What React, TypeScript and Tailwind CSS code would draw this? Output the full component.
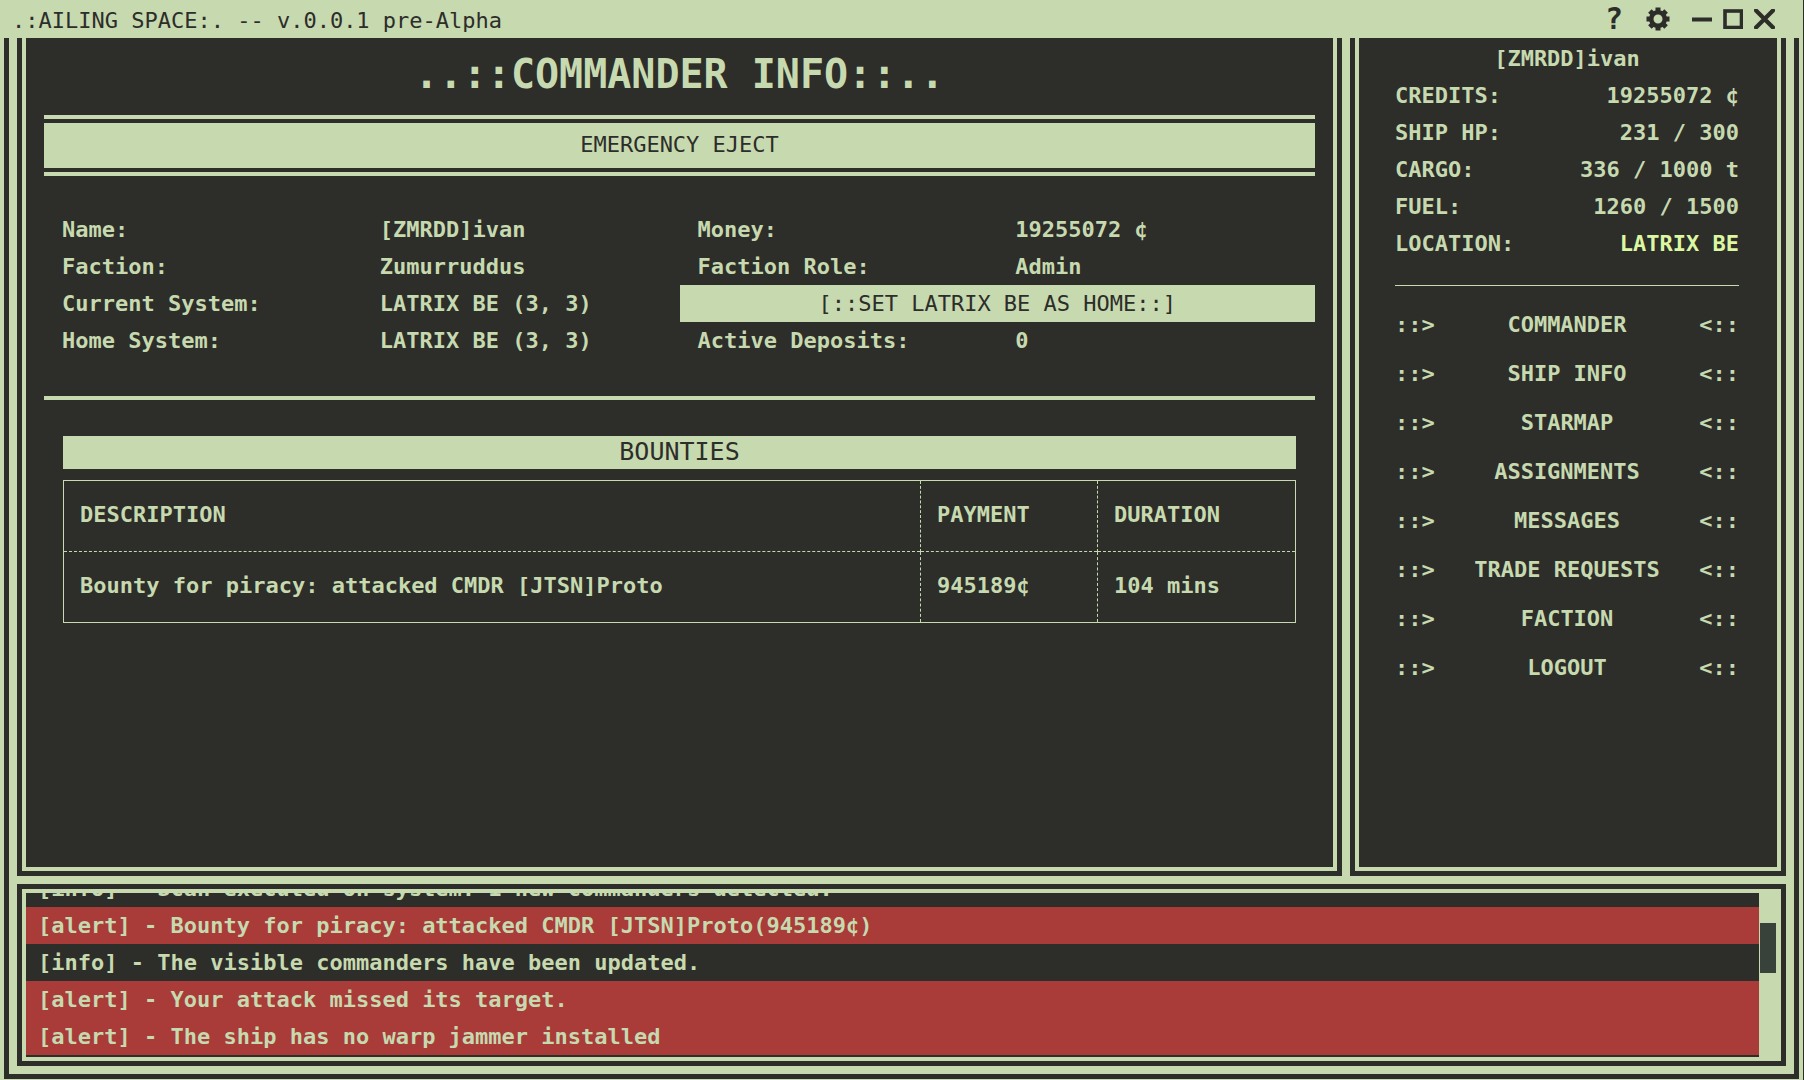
import React from 'react'

const info = [
  ['Name:', '[ZMRDD]ivan', 'Money:', '19255072 ¢'],
  ['Faction:', 'Zumurruddus', 'Faction Role:', 'Admin'],
  ['Current System:', 'LATRIX BE (3, 3)'],
  ['Home System:', 'LATRIX BE (3, 3)', 'Active Deposits:', '0'],
]

const stats = [
  ['CREDITS:', '19255072 ¢'],
  ['SHIP HP:', '231 / 300'],
  ['CARGO:', '336 / 1000 t'],
  ['FUEL:', '1260 / 1500'],
]

const menu = ['COMMANDER', 'SHIP INFO', 'STARMAP', 'ASSIGNMENTS', 'MESSAGES', 'TRADE REQUESTS', 'FACTION', 'LOGOUT']

const bounties = [{ description: 'Bounty for piracy: attacked CMDR [JTSN]Proto', payment: '945189¢', duration: '104 mins' }]

const logs = [
  { level: 'info', text: 'Scan executed on system: 1 new commanders detected.' },
  { level: 'alert', text: 'Bounty for piracy: attacked CMDR [JTSN]Proto(945189¢)' },
  { level: 'info', text: 'The visible commanders have been updated.' },
  { level: 'alert', text: 'Your attack missed its target.' },
  { level: 'alert', text: 'The ship has no warp jammer installed' },
]

const TitleBar = () => (
  <header className="flex h-[38px] shrink-0 items-center justify-between pr-7 pl-3 text-[#2d2d2a]">
    <span className="pt-0.5 whitespace-pre">.:AILING SPACE:. -- v.0.0.1 pre-Alpha</span>
    <div className="flex items-center">
      <button aria-label="Help" className="mr-[22px] w-5 text-[30px] leading-[38px] font-bold">?</button>
      <button aria-label="Settings" className="mr-[22px]">
        <svg width="24" height="24" viewBox="0 0 24 24" fill="none" stroke="currentColor">
          <circle cx="12" cy="12" r="6.8" strokeWidth="4.600" />
          <g strokeWidth="5" strokeLinecap="butt">
            <path d="M12 0.500v5M12 18.500v5M0.500 12h5M18.500 12h5" />
            <path d="M3.900 3.900l3.500 3.500M16.600 16.600l3.500 3.500M20.100 3.900l-3.500 3.500M7.400 16.600l-3.500 3.500" />
          </g>
        </svg>
      </button>
      <button aria-label="Minimize" className="mr-[11px]">
        <svg width="20" height="20" viewBox="0 0 20 20">
          <path d="M0 10.5h20" stroke="currentColor" strokeWidth="4" />
        </svg>
      </button>
      <button aria-label="Maximize" className="mr-[11px]">
        <svg width="20" height="20" viewBox="0 0 20 20">
          <rect x="2" y="2" width="16.500" height="16.500" fill="none" stroke="currentColor" strokeWidth="3.600" />
        </svg>
      </button>
      <button aria-label="Close">
        <svg width="21" height="20" viewBox="0 0 21 20">
          <path d="M2 1.500L19 18.500M19 1.500L2 18.500" stroke="currentColor" strokeWidth="4.200" strokeLinecap="round" />
        </svg>
      </button>
    </div>
  </header>
)

const CommanderInfo = () => (
  <main className="flex-1 border-x-[5px] border-b-[5px] border-[#2d2d2a]">
    <div className="h-full border-x-4 border-b-4 border-[#c6d9af] bg-[#2d2d2a] px-[18px]">
      <h1 className="pb-1 text-center text-[40px] leading-[73px] font-bold">..::COMMANDER INFO::..</h1>

      <div className="border-y-4 border-[#c6d9af] py-1">
        <button className="block h-[45px] w-full bg-[#c6d9af] pb-0.5 text-[#2d2d2a]">EMERGENCY EJECT</button>
      </div>

      <div className="grid grid-cols-4 border-b-4 border-[#c6d9af] pt-[35px] pb-[37px] leading-[37px] font-bold">
        {info.map(([label, value, label2, value2]) => (
          <React.Fragment key={label}>
            <div className="pl-[18px]">{label}</div>
            <div className="pl-[18px]">{value}</div>
            {label2 ? (
              <>
                <div className="pl-[18px]">{label2}</div>
                <div className="pl-[18px]">{value2}</div>
              </>
            ) : (
              <button className="col-span-2 bg-[#c6d9af] font-normal text-[#2d2d2a]">[::SET LATRIX BE AS HOME::]</button>
            )}
          </React.Fragment>
        ))}
      </div>

      <section className="mx-[19px] mt-9">
        <h2 className="mb-[11px] bg-[#c6d9af] pb-0.5 text-center text-[25px] leading-[31px] text-[#2d2d2a]">BOUNTIES</h2>
        <table className="w-full border-collapse border border-[#c6d9af] text-left">
          <thead>
            <tr className="h-[71px] border-b border-dashed border-[#c6d9af]">
              <th className="border-r border-dashed border-[#c6d9af] px-4 pb-1">DESCRIPTION</th>
              <th className="w-[177px] border-r border-dashed border-[#c6d9af] px-4 pb-1">PAYMENT</th>
              <th className="w-[198px] px-4 pb-1">DURATION</th>
            </tr>
          </thead>
          <tbody className="font-bold">
            {bounties.map((b) => (
              <tr key={b.description} className="h-[71px]">
                <td className="border-r border-dashed border-[#c6d9af] px-4 pb-1">{b.description}</td>
                <td className="border-r border-dashed border-[#c6d9af] px-4 pb-1">{b.payment}</td>
                <td className="px-4 pb-1">{b.duration}</td>
              </tr>
            ))}
          </tbody>
        </table>
      </section>
    </div>
  </main>
)

const Sidebar = () => (
  <aside className="w-[436px] shrink-0 border-x-[5px] border-b-[5px] border-[#2d2d2a]">
    <div className="h-full border-x-4 border-b-4 border-[#c6d9af] bg-[#2d2d2a] pt-0.5 pr-[38px] pl-9 font-bold">
      <div className="leading-[37px]">
        <p className="text-center">[ZMRDD]ivan</p>
        {stats.map(([label, value]) => (
          <div key={label} className="flex justify-between">
            <span>{label}</span>
            <span>{value}</span>
          </div>
        ))}
        <div className="flex justify-between">
          <span>LOCATION:</span>
          <a href="#location" className="text-[#dcf7a1]">LATRIX BE</a>
        </div>
      </div>
      <nav className="mt-[23px] border-t border-[#c6d9af] pt-3.5">
        {menu.map((item) => (
          <a key={item} href={`#${item.toLowerCase().replace(' ', '-')}`} className="flex justify-between leading-[49px]">
            <span>::&gt;</span>
            <span>{item}</span>
            <span>&lt;::</span>
          </a>
        ))}
      </nav>
    </div>
  </aside>
)

const EventLog = () => (
  <section className="shrink-0 border-[5px] border-[#2d2d2a]">
    <div className="flex h-[172px] border-4 border-[#c6d9af] bg-[#2d2d2a]">
      <div className="flex flex-1 flex-col justify-end overflow-hidden pb-0.5 leading-[37px] font-bold">
        {logs.map((log) => (
          <p key={log.text} className={log.level === 'alert' ? 'shrink-0 bg-[#a93b39] pl-3' : 'shrink-0 pl-3'}>
            [{log.level}] - {log.text}
          </p>
        ))}
      </div>
      <div className="w-[18px] bg-[#c6d9af] px-px pt-[30px]">
        <div className="h-[50px] bg-[#38423b]" />
      </div>
    </div>
  </section>
)

export default function App() {
  return (
    <div className="flex h-screen flex-col border-r border-[#2d2d2a] bg-[#c6d9af] font-['DejaVu_Sans_Mono',monospace] text-[22px] text-[#c6d9af]">
      <TitleBar />
      <div className="mx-1 mb-px flex min-h-0 flex-1 flex-col gap-2 border-x-[5px] border-b-[5px] border-[#2d2d2a] px-2 pb-2">
        <div className="flex min-h-0 flex-1 gap-2">
          <CommanderInfo />
          <Sidebar />
        </div>
        <EventLog />
      </div>
    </div>
  )
}
